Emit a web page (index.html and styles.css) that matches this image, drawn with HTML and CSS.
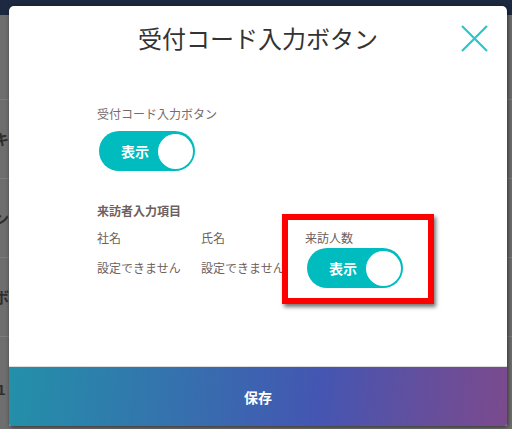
FILE: index.html
```html
<!DOCTYPE html>
<html lang="ja">
<head>
<meta charset="utf-8">
<link rel="stylesheet" href="styles.css">
</head>
<body>
<div class="page">
  <div class="topbar"></div>
  <div class="rows">
    <div class="row row-first"></div>
    <div class="row"><span class="frag">キ</span></div>
    <div class="row"><span class="frag">ン</span></div>
    <div class="row"><span class="frag">ボ</span></div>
    <div class="row row-last"><span class="frag frag-num">1</span></div>
  </div>
</div>

<div class="modal">
  <div class="modal-header">
    <h1 class="modal-title">受付コード入力ボタン</h1>
    <button class="close" aria-label="閉じる">
      <svg width="27" height="27" viewBox="0 0 27 27"><path d="M1 1 L26 26 M26 1 L1 26" stroke="#2cc6c8" stroke-width="2.2" fill="none"/></svg>
    </button>
  </div>
  <div class="modal-body">
    <div class="field-label">受付コード入力ボタン</div>
    <div class="toggle toggle-main"><span class="toggle-text">表示</span><span class="knob"></span></div>

    <div class="section-label">来訪者入力項目</div>
    <div class="grid">
      <div class="col">
        <div class="col-label">社名</div>
        <div class="col-value">設定できません</div>
      </div>
      <div class="col">
        <div class="col-label">氏名</div>
        <div class="col-value">設定できません</div>
      </div>
      <div class="col">
        <div class="col-label">来訪人数</div>
        <div class="toggle toggle-col"><span class="toggle-text">表示</span><span class="knob"></span></div>
      </div>
    </div>
  </div>
  <div class="modal-footer">保存</div>
  <div class="highlight"></div>
</div>
</body>
</html>
```

FILE: styles.css
```css
html, body {
  margin: 0;
  padding: 0;
}
body {
  width: 512px;
  height: 429px;
  overflow: hidden;
  background: #6e6e6e;
  font-family: "Noto Sans CJK JP", "Noto Sans", sans-serif;
  position: relative;
}
.page {
  display: flex;
  flex-direction: column;
}
.topbar {
  height: 15px;
  background: #1c2941;
}
.rows {
  display: flex;
  flex-direction: column;
}
.row {
  height: 78px;
  border-bottom: 1px solid #7c7c7c;
  display: flex;
  align-items: center;
}
.row-first {
  height: 84px;
}
.row-last {
  border-bottom: none;
}
.frag {
  font-size: 15px;
  font-weight: 700;
  color: #2e2e2e;
  margin-left: -6px;
  line-height: 20px;
}
.frag-num {
  margin-left: -3px;
  margin-top: 28px;
  font-family: "Liberation Sans", sans-serif;
}

.modal {
  position: absolute;
  left: 9px;
  top: 6px;
  width: 498px;
  height: 420px;
  background: #fff;
  border-radius: 5px 5px 2px 2px;
  box-shadow: 1px 1px 4px rgba(0,0,0,0.55);
  display: flex;
  flex-direction: column;
}
.modal-header {
  height: 64px;
  position: relative;
  display: flex;
  justify-content: center;
  align-items: center;
}
.modal-title {
  margin: 0;
  font-size: 24px;
  font-weight: 400;
  color: #333;
  line-height: 32px;
  letter-spacing: 0;
}
.close {
  position: absolute;
  left: 452px;
  top: 19px;
  width: 27px;
  height: 27px;
  padding: 0;
  border: 0;
  background: none;
  display: block;
}
.close svg { display: block; }

.modal-body {
  flex: 1;
  padding: 35px 0 0 88px;
}
.field-label {
  font-size: 12px;
  line-height: 18px;
  color: #786a6a;
}
.toggle {
  width: 96px;
  height: 40px;
  border-radius: 20px;
  background: #00bcbe;
  display: flex;
  align-items: center;
  justify-content: space-between;
  padding: 0 2px 0 22px;
  box-sizing: border-box;
}
.toggle-main {
  margin: 8px 0 0 2px;
}
.toggle-text {
  color: #fff;
  font-size: 14px;
  font-weight: 700;
  line-height: 20px;
}
.knob {
  width: 35px;
  height: 35px;
  border-radius: 50%;
  background: #fff;
}
.section-label {
  margin-top: 31px;
  font-size: 12px;
  line-height: 18px;
  font-weight: 700;
  color: #6e6060;
}
.grid {
  display: grid;
  grid-template-columns: 104px 104px 104px;
  margin-top: 9px;
}
.col-label {
  font-size: 12px;
  line-height: 18px;
  color: #6e6060;
}
.col-value {
  margin-top: 12px;
  font-size: 12px;
  line-height: 18px;
  color: #6e6060;
  white-space: nowrap;
}
.toggle-col {
  margin: 1px 0 0 2px;
}

.modal-footer {
  height: 59px;
  border-top: 1px solid #dcdcdc;
  background: linear-gradient(95deg, #2390a9 0%, #3670ae 35%, #4456b2 62%, #634f9e 82%, #7b4a8d 100%);
  color: #fff;
  font-size: 14px;
  font-weight: 700;
  display: flex;
  align-items: center;
  justify-content: center;
  border-radius: 0 0 2px 2px;
}

.highlight {
  position: absolute;
  left: 273px;
  top: 208px;
  width: 140px;
  height: 78px;
  border: 6px solid #ff0000;
  box-shadow: 2px 3px 4px rgba(0,0,0,0.55);
}
```
